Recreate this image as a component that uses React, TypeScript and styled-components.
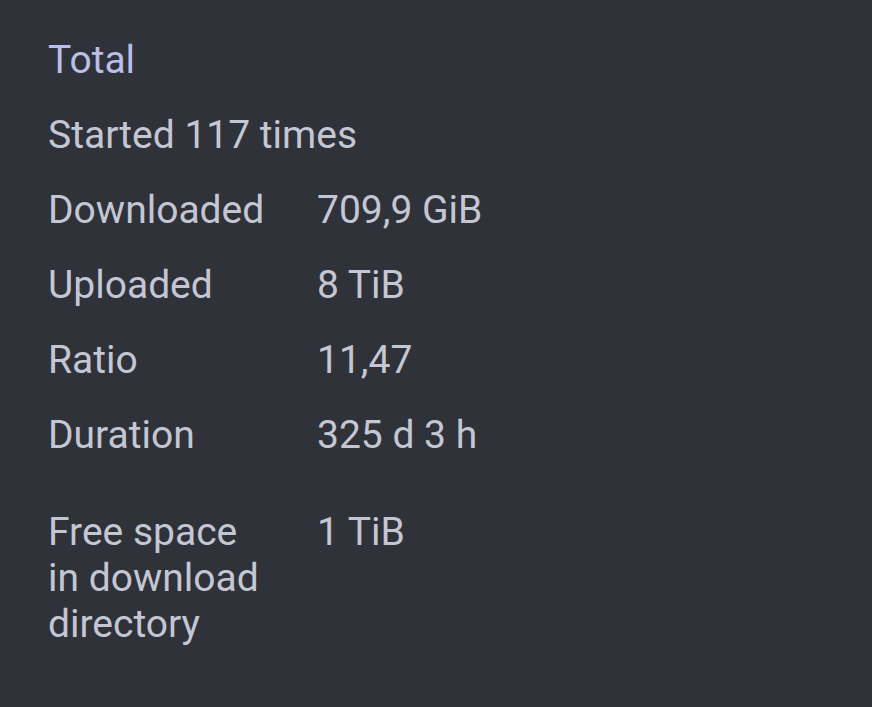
import { createGlobalStyle, styled } from "styled-components";

const GlobalStyle = createGlobalStyle`
	html, body {
		margin: 0;
		padding: 0;
		background: #2f3239;
	}
	body {
		font-family: Roboto, "Noto Sans", sans-serif;
	}
`;

const Page = styled.div`
	min-height: 707px;
	box-sizing: border-box;
	padding: 37px 48px 0;
	background: #2f3239;
	color: #c4c7d3;
	font-size: 39px;
	line-height: 46px;
	display: flex;
	flex-direction: column;
	gap: 29px;
`;
const Title = styled.div`
	color: #bbbee8;
`;
const Line = styled.div``;
const Table = styled.div<{ $spaced?: boolean }>`
	display: flex;
	flex-direction: column;
	gap: 29px;
	margin-top: ${(p) => (p.$spaced ? "22px" : "0")};
`;
const Row = styled.div`
	display: grid;
	grid-template-columns: 269px 1fr;
	align-items: start;
`;
const Label = styled.div`
	padding-right: 50px;
`;
const Value = styled.div``;

const totals = [
	["Downloaded", "709,9 GiB"],
	["Uploaded", "8 TiB"],
	["Ratio", "11,47"],
	["Duration", "325 d 3 h"],
];

export default function App() {
	return (
		<>
			<GlobalStyle />
			<Page>
				<Title>Total</Title>
				<Line>Started 117 times</Line>
				<Table>
					{totals.map(([label, value]) => (
						<Row key={label}>
							<Label>{label}</Label>
							<Value>{value}</Value>
						</Row>
					))}
				</Table>
				<Table $spaced>
					<Row>
						<Label>Free space in download directory</Label>
						<Value>1 TiB</Value>
					</Row>
				</Table>
			</Page>
		</>
	);
}
